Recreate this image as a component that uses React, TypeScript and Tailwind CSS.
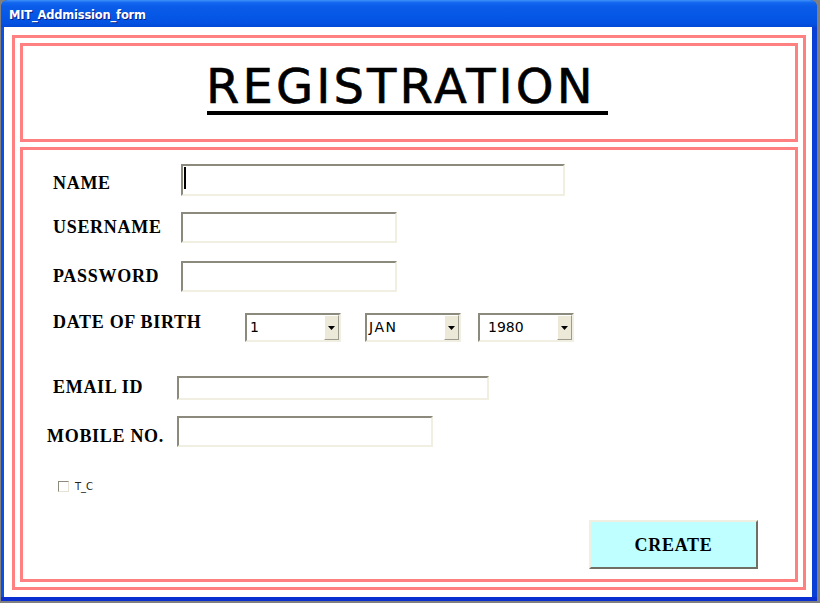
import React from "react";

const labelCls =
  "shrink-0 text-[18px] leading-[18px] font-bold tracking-[0.7px] text-black whitespace-nowrap";
const serif = { fontFamily: '"Liberation Serif", "Times New Roman", serif' };

function TextBox({ w, h, caret }: { w: string; h: string; caret?: boolean }) {
  return (
    <div
      className={`${w} ${h} shrink-0 bg-white border-2 border-t-[#8c897d] border-l-[#8c897d] border-b-[#f1efe2] border-r-[#f1efe2] flex`}
    >
      {caret ? <div className="ml-[1px] mt-[1px] w-[2px] h-[22px] bg-black" /> : null}
    </div>
  );
}

function Combo({ value, extra }: { value: string; extra?: string }) {
  return (
    <div className="w-[96px] h-[29px] shrink-0 flex bg-white border-2 border-t-[#8c897d] border-l-[#8c897d] border-b-[#f1efe2] border-r-[#f1efe2]">
      <div
        className={`flex-1 flex items-center text-[14px] text-black ${extra ?? ""}`}
        style={{ fontFamily: '"DejaVu Sans", sans-serif' }}
      >
        {value}
      </div>
      <div className="w-[15px] h-full bg-[#ece9d8] border border-t-white border-l-white border-b-[#9d9a8e] border-r-[#9d9a8e] flex items-center justify-center">
        <svg width="7" height="4" viewBox="0 0 7 4">
          <path d="M0 0 H7 L3.5 4 Z" fill="#000" />
        </svg>
      </div>
    </div>
  );
}

export default function App() {
  return (
    <div className="w-[820px] h-[603px] bg-[#808080] overflow-hidden">
      <div className="ml-[1px] w-[816px] h-[601px] rounded-t-[7px] overflow-hidden flex flex-col bg-[#0a46dc]">
        {/* title bar */}
        <div
          className="h-[27px] shrink-0 flex items-center pl-[8px]"
          style={{
            background:
              "linear-gradient(to bottom, #3f91f8 0%, #1166ee 10%, #0a5ce8 25%, #0657e6 60%, #0552e2 85%, #0349d6 100%)",
          }}
        >
          <span
            className="text-white text-[11.5px] font-bold mt-[4px] tracking-[-0.2px]"
            style={{
              fontFamily: '"DejaVu Sans", Verdana, sans-serif',
              textShadow: "1px 1px 0 #0a1f80",
            }}
          >
            MIT_Addmission_form
          </span>
        </div>
        {/* client area */}
        <div className="flex-1 flex">
          <div className="w-[3px] shrink-0 bg-[#0a4fe4]" />
          <div className="flex-1 bg-white pl-[8px] pt-[8px] pr-[6px] pb-[7px] flex flex-col">
            <div className="w-[794px] h-[555px] border-[3px] border-[#ff8080] p-[5px] flex flex-col gap-[5px]">
              {/* header */}
              <div className="h-[99px] shrink-0 border-[3px] border-[#ff8080] flex flex-col">
                <div
                  className="ml-[183px] mt-[16px] text-[48px] leading-[48px] tracking-[3.1px] text-black whitespace-nowrap [-webkit-text-stroke:0.6px_black]"
                  style={{ fontFamily: '"DejaVu Sans", sans-serif' }}
                >
                  REGISTRATION
                </div>
                <div className="ml-[184px] mt-[1px] w-[401px] h-[4px] bg-black" />
              </div>
              {/* body */}
              <div className="flex-1 border-[3px] border-[#ff8080] flex flex-col" style={serif}>
                {/* NAME */}
                <div className="mt-[14px] flex items-start">
                  <div className={`${labelCls} ml-[30px] w-[128px] mt-[10px]`}>NAME</div>
                  <TextBox w="w-[384px]" h="h-[32px]" caret />
                </div>
                {/* USERNAME */}
                <div className="mt-[16px] flex items-start">
                  <div className={`${labelCls} ml-[30px] w-[128px] mt-[6px]`}>USERNAME</div>
                  <TextBox w="w-[216px]" h="h-[31px]" />
                </div>
                {/* PASSWORD */}
                <div className="mt-[18px] flex items-start">
                  <div className={`${labelCls} ml-[30px] w-[128px] mt-[6px]`}>PASSWORD</div>
                  <TextBox w="w-[216px]" h="h-[31px]" />
                </div>
                {/* DOB */}
                <div className="mt-[21px] flex items-start">
                  <div className={`${labelCls} ml-[30px] w-[192px] mt-[0px]`}>DATE OF BIRTH</div>
                  <Combo value="1" extra="pl-[3px]" />
                  <div className="w-[24px] shrink-0" />
                  <Combo value="JAN" extra="pl-[2px] tracking-[1.5px]" />
                  <div className="w-[17px] shrink-0" />
                  <Combo value="1980" extra="pl-[8px]" />
                </div>
                {/* EMAIL */}
                <div className="mt-[34px] flex items-start">
                  <div className={`${labelCls} ml-[30px] w-[124px] mt-[2px]`}>EMAIL ID</div>
                  <TextBox w="w-[312px]" h="h-[24px]" />
                </div>
                {/* MOBILE */}
                <div className="mt-[16px] flex items-start">
                  <div className={`${labelCls} ml-[24px] w-[130px] mt-[11px]`}>MOBILE NO.</div>
                  <TextBox w="w-[256px]" h="h-[31px]" />
                </div>
                {/* checkbox */}
                <div className="mt-[34px] ml-[35px] flex items-center h-[11px]">
                  <div className="w-[11px] h-[11px] bg-white border border-t-[#8c897d] border-l-[#8c897d] border-b-[#e6e3d6] border-r-[#e6e3d6]" />
                  <span
                    className="ml-[6px] text-[10px] leading-[11px] text-[#222]"
                    style={{ fontFamily: '"DejaVu Sans", sans-serif' }}
                  >
                    T_C
                  </span>
                </div>
                {/* button */}
                <div className="mt-[28px] flex justify-end pr-[37px]">
                  <div className="w-[169px] h-[49px] bg-[#c0ffff] border-2 border-t-[#f1efe2] border-l-[#f1efe2] border-b-[#716f64] border-r-[#716f64] flex items-center justify-center">
                    <span className={labelCls}>CREATE</span>
                  </div>
                </div>
              </div>
            </div>
          </div>
          <div className="w-[5px] shrink-0 bg-[#0a3fd6]" />
        </div>
        <div className="h-[4px] shrink-0 bg-[#0b2ed0]" />
      </div>
    </div>
  );
}
